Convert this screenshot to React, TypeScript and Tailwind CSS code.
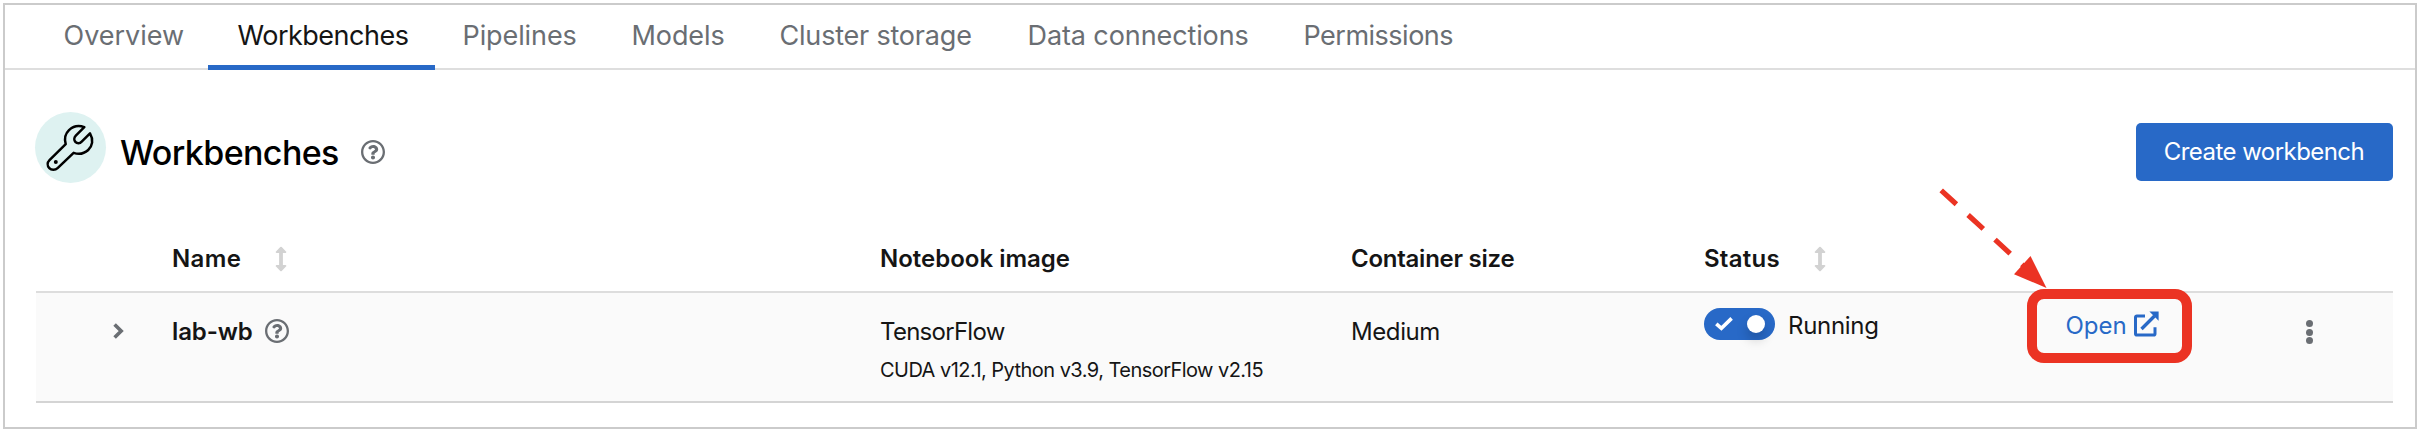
const tabs = [
  { label: 'Overview', cls: 'w-[173px] pl-[29px]', active: false },
  { label: 'Workbenches', cls: 'w-[227px] pl-[30px] tracking-[-0.5px]', active: true },
  { label: 'Pipelines', cls: 'w-[169px] pl-[28px] tracking-[-0.1px]', active: false },
  { label: 'Models', cls: 'w-[148px] pl-[28px] tracking-[-0.1px]', active: false },
  { label: 'Cluster storage', cls: 'w-[248px] pl-[28px] tracking-[-0.2px]', active: false },
  { label: 'Data connections', cls: 'w-[276px] pl-[28px] tracking-[-0.1px]', active: false },
  { label: 'Permissions', cls: 'w-[204px] pl-[28px] tracking-[-0.5px]', active: false },
];

function HelpIcon() {
  return (
    <svg width="24" height="24" viewBox="8 8 496 496" fill="#6a6e73" className="shrink-0">
      <path d="M256 8C119.043 8 8 119.083 8 256c0 136.997 111.043 248 248 248s248-111.003 248-248C504 119.083 392.957 8 256 8zm0 448c-110.532 0-200-89.431-200-200 0-110.495 89.472-200 200-200 110.491 0 200 89.471 200 200 0 110.53-89.431 200-200 200zm107.244-255.2c0 67.052-72.421 68.084-72.421 92.863V300c0 6.627-5.373 12-12 12h-45.647c-6.627 0-12-5.373-12-12v-8.659c0-35.745 27.1-50.034 47.579-61.516 17.561-9.845 28.324-16.541 28.324-29.579 0-17.246-21.999-28.693-39.784-28.693-23.189 0-33.894 10.977-48.942 29.969-4.057 5.12-11.46 6.071-16.666 2.124l-27.824-21.098c-5.107-3.872-6.251-11.066-2.644-16.363C184.846 131.491 214.94 112 261.794 112c49.071 0 101.45 38.304 101.45 88.8zM298 368c0 23.159-18.841 42-42 42s-42-18.841-42-42 18.841-42 42-42 42 18.841 42 42z" />
    </svg>
  );
}

function SortIcon() {
  return (
    <svg width="12" height="26" viewBox="0 0 12 26" className="shrink-0">
      <path
        d="M6 1.8 L10.3 6.1 H1.7 Z M6 24.2 L10.3 19.9 H1.7 Z"
        fill="#d2d2d2"
        stroke="#d2d2d2"
        strokeWidth="2"
        strokeLinejoin="round"
      />
      <path d="M6 5 V21" stroke="#d2d2d2" strokeWidth="3.8" />
    </svg>
  );
}

function WrenchBadge() {
  return (
    <div className="flex h-[71px] w-[71px] shrink-0 items-center justify-center rounded-full bg-[#def2f1]">
      <svg width="71" height="71" viewBox="0 0 71 71" fill="none" stroke="#000" strokeWidth="2.5" strokeLinejoin="round" strokeLinecap="round">
        <path d="M49.3 15.2 L40.8 23.7 C38.8 25.8 38.9 28.4 40.5 30 C42.2 31.6 44.8 31.6 46.7 29.6 L55 21.4 C58.8 27.8 57.4 34.2 53.2 38 C49.4 41.4 43.8 42.7 38.6 40.8 L22.6 56.1 C20.2 58.5 16.4 58.4 14.3 56.1 C12.1 53.8 12.2 50.4 14.5 48.1 L30.7 32.1 C29 26.2 30.7 21.4 34 18.2 C38 14.4 43.9 13.2 49.3 15.2 Z" />
        <circle cx="20.8" cy="50" r="2" fill="#000" stroke="none" />
      </svg>
    </div>
  );
}

function Toggle() {
  return (
    <div className="flex h-8 w-[71px] shrink-0 items-center justify-between rounded-full bg-[#2869c7] pr-[10.5px] pl-[11px]">
      <svg width="18" height="14" viewBox="0 0 18 14" fill="none" stroke="#fff" strokeWidth="3.6">
        <path d="M1.3 6.8 L6.4 11.4 L16.6 1.4" />
      </svg>
      <span className="h-[18px] w-[18px] rounded-full bg-white shadow-[0_7px_12px_rgba(0,0,0,0.2)]" />
    </div>
  );
}

function ExternalIcon() {
  return (
    <svg width="25" height="26" viewBox="0 0 25 26" fill="none" stroke="#2869c7" strokeWidth="3">
      <path d="M11 4.9 H2.9 Q1.5 4.9 1.5 6.3 V22.7 Q1.5 24 2.9 24 H19.7 Q21 24 21 22.7 V16.2" />
      <path d="M7.5 18 L20.5 5" strokeWidth="3.4" />
      <path d="M15.4 0.5 H24.6 V9.7 Z" fill="#2869c7" stroke="none" />
    </svg>
  );
}

export default function App() {
  return (
    <div className="relative h-[434px] w-[2424px] overflow-hidden bg-white pt-[3px] pl-[3px] font-['Inter','Liberation_Sans',sans-serif] text-[24px] text-[#151515]">
      <div className="h-[426px] w-[2414px] border-2 border-[#cbcbcb]">
        <nav className="flex h-[65px] border-b-2 border-[#dedede] pl-[29.5px] text-[27px] leading-[61px] text-[#6a6e73]">
          {tabs.map((t) => (
            <div
              key={t.label}
              className={`${t.cls} h-[65px] shrink-0 whitespace-nowrap ${t.active ? 'border-b-[5px] border-[#2869c7] text-[#151515]' : ''}`}
            >
              {t.label}
            </div>
          ))}
        </nav>

        <header className="flex h-[156px] items-start pr-[22.5px] pl-[30px]">
          <div className="pt-[42px]">
            <WrenchBadge />
          </div>
          <h1 className="ml-[14px] w-[241px] pt-[62px] text-[34px] leading-[41px] font-medium tracking-[-0.6px] whitespace-nowrap text-black">
            Workbenches
          </h1>
          <div className="pt-[70px]">
            <HelpIcon />
          </div>
          <button className="mt-[53px] ml-auto h-[58px] w-[257px] rounded-[5px] bg-[#2869c7] text-center text-[24px] tracking-[-0.55px] whitespace-nowrap text-white">
            Create workbench
          </button>
        </header>

        <section className="mr-[22.5px] ml-[30.5px]">
          <div className="flex h-[67px] items-start border-b-2 border-[#dddddd] pt-[16px] pl-[136.5px] leading-[34px] font-semibold whitespace-nowrap">
            <div className="flex w-[708px] items-center">
              <span className="w-[103px] tracking-[0.4px]">Name</span>
              <SortIcon />
            </div>
            <div className="w-[471px]">Notebook image</div>
            <div className="w-[353px] tracking-[-0.25px]">Container size</div>
            <div className="flex items-center">
              <span className="w-[110px] tracking-[0.25px]">Status</span>
              <SortIcon />
            </div>
          </div>

          <div className="flex h-[110px] border-b-2 border-[#d4d4d4] bg-[#fafafa] whitespace-nowrap">
            <div className="w-[136.5px] pt-[30px] pl-[77px]">
              <svg width="11" height="16" viewBox="0 0 11 16" fill="none" stroke="#6a6e73" strokeWidth="3.6">
                <path d="M1.6 1.4 L8.2 8 L1.6 14.6" />
              </svg>
            </div>
            <div className="flex w-[708px] gap-[12px] pt-[22px] leading-[34px] font-semibold">
              <span className="w-[81px] tracking-[-0.1px]">lab-wb</span>
              <div className="pt-[4px]">
                <HelpIcon />
              </div>
            </div>
            <div className="w-[471px] pt-[22px] leading-[34px]">
              <div className="tracking-[-0.73px]">TensorFlow</div>
              <div className="mt-[5px] text-[20px] leading-[32px] tracking-[-0.54px]">CUDA v12.1, Python v3.9, TensorFlow v2.15</div>
            </div>
            <div className="w-[353px] pt-[22px] leading-[34px] tracking-[-0.4px]">Medium</div>
            <div className="mt-[15px] flex h-8 w-[361.5px] items-center gap-[13px]">
              <Toggle />
              <span className="pt-[3px] tracking-[-0.3px]">Running</span>
            </div>
            <div className="mt-[15px] flex h-8 w-[240px] items-center gap-[7px] text-[#2869c7]">
              <span className="pt-[3px]">Open</span>
              <ExternalIcon />
            </div>
            <div className="flex flex-col gap-[1.5px] pt-[27px]">
              <i className="h-[7px] w-[7px] rounded-full bg-[#6a6e73]" />
              <i className="h-[7px] w-[7px] rounded-full bg-[#6a6e73]" />
              <i className="h-[7px] w-[7px] rounded-full bg-[#6a6e73]" />
            </div>
          </div>
        </section>
      </div>

      <div className="absolute top-[289px] left-[2027px] h-[74px] w-[165px] rounded-[17px] border-[10px] border-[#eb3323]" />
      <svg className="absolute top-[180px] left-[1920px]" width="140" height="120" viewBox="0 0 140 120">
        <path d="M21.2 10.3 L107 89" stroke="#eb3323" strokeWidth="5.2" strokeDasharray="20.6 15.9" />
        <path d="M110.5 76 L126.5 108 L94 94.2 Z" fill="#eb3323" />
      </svg>
    </div>
  );
}
